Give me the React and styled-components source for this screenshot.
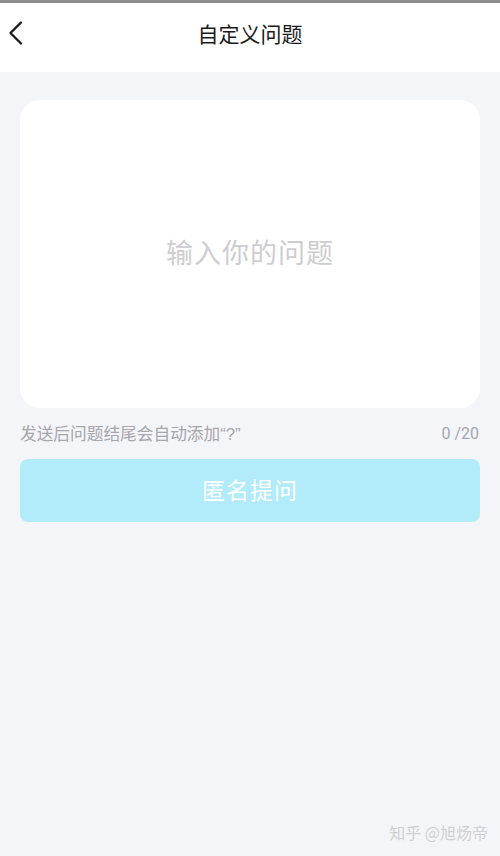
import React from "react";
import styled, { createGlobalStyle } from "styled-components";

const Global = createGlobalStyle`
  html, body { margin: 0; padding: 0; }
  body {
    background: #f4f5f9;
    font-family: "Noto Sans CJK SC", "Noto Sans", sans-serif;
  }
`;

const Page = styled.div`
  width: 500px;
  height: 856px;
  background: #f4f5f9;
  display: flex;
  flex-direction: column;
  position: relative;
  overflow: hidden;
`;

const TopLine = styled.div`
  height: 3px;
  background: #8e8e8e;
`;

const Header = styled.div`
  height: 69px;
  box-sizing: border-box;
  padding-bottom: 9px;
  background: #fff;
  display: grid;
  grid-template-columns: 60px 1fr 60px;
  align-items: center;
`;

const Back = styled.button`
  border: none;
  background: none;
  padding: 0 0 0 8px;
  height: 40px;
  display: flex;
  align-items: center;
  cursor: pointer;
`;

const Title = styled.div`
  text-align: center;
  font-size: 21px;
  color: #1a1a1a;
`;

const Body = styled.div`
  padding: 28px 20px 0 20px;
  display: flex;
  flex-direction: column;
`;

const Card = styled.div`
  height: 308px;
  background: #fff;
  border-radius: 20px;
  display: flex;
  align-items: center;
  justify-content: center;
`;

const Placeholder = styled.div`
  font-size: 27px;
  color: #cdcdd1;
  letter-spacing: 1px;
  margin-top: -6px;
`;

const HintRow = styled.div`
  display: flex;
  justify-content: space-between;
  align-items: center;
  margin-top: 13px;
  height: 24px;
  font-size: 16.7px;
  color: #a6a6ab;
`;

const Quote = styled.span`
  font-family: "Liberation Sans", sans-serif;
`;

const Count = styled.span`
  font-family: "Roboto", "Noto Sans", sans-serif;
  font-size: 16px;
  margin-right: 1px;
`;

const Submit = styled.button`
  margin-top: 14px;
  height: 63px;
  padding-bottom: 4px;
  border: none;
  border-radius: 8px;
  background: #b2ebfa;
  color: #fff;
  font-family: "Noto Sans CJK SC", sans-serif;
  font-size: 23px;
  letter-spacing: 1px;
  cursor: pointer;
`;

const Watermark = styled.div`
  position: absolute;
  right: 12px;
  bottom: 12px;
  font-size: 16px;
  color: #d0d0d4;
`;

export default function App() {
  return (
    <Page>
      <Global />
      <TopLine />
      <Header>
        <Back aria-label="back">
          <svg width="16" height="26" viewBox="0 0 16 26">
            <path d="M13 2.5 L2.5 13 L13 23.5" fill="none" stroke="#1a1a1a" strokeWidth="2.3" strokeLinecap="round" strokeLinejoin="round" />
          </svg>
        </Back>
        <Title>自定义问题</Title>
        <div />
      </Header>
      <Body>
        <Card>
          <Placeholder>输入你的问题</Placeholder>
        </Card>
        <HintRow>
          <span>发送后问题结尾会自动添加<Quote>“?”</Quote></span>
          <Count>0 /20</Count>
        </HintRow>
        <Submit>匿名提问</Submit>
      </Body>
      <Watermark>知乎 @旭炀帝</Watermark>
    </Page>
  );
}
